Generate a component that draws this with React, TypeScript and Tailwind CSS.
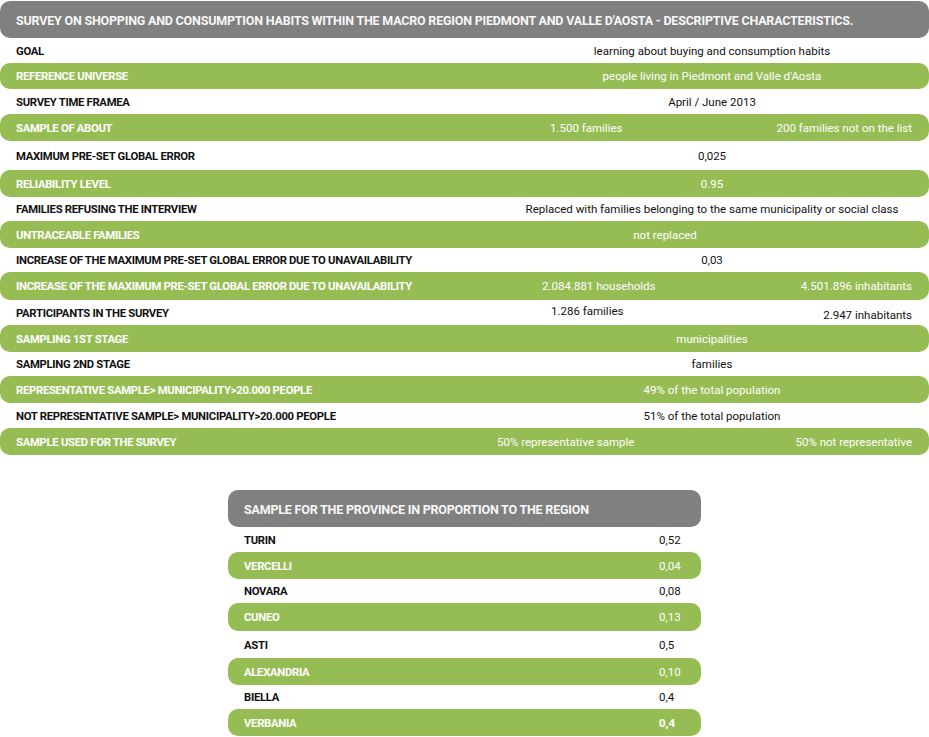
import React from "react";

type Row = {
  label: string;
  value?: string;
  left?: string;
  right?: string;
  green: boolean;
  h: string;
  leftClass?: string;
  valueClass?: string;
};

const rows: Row[] = [
  { label: "GOAL", value: "learning about buying and consumption habits", green: false, h: "h-[25px]" },
  { label: "REFERENCE UNIVERSE", value: "people living in Piedmont and Valle d'Aosta", green: true, h: "h-[26px]" },
  { label: "SURVEY TIME FRAMEA", value: "April / June 2013", green: false, h: "h-[25px]" },
  { label: "SAMPLE OF ABOUT", left: "1.500 families", right: "200 families not on the list", green: true, h: "h-[27px]", leftClass: "ml-[38px]" },
  { label: "MAXIMUM PRE-SET GLOBAL ERROR", value: "0,025", green: false, h: "h-[29px]" },
  { label: "RELIABILITY LEVEL", value: "0.95", green: true, h: "h-[27px]" },
  { label: "FAMILIES REFUSING THE INTERVIEW", value: "Replaced with families belonging to the same municipality or social class", green: false, h: "h-[24px]" },
  { label: "UNTRACEABLE FAMILIES", value: "not replaced", green: true, h: "h-[27px]", valueClass: "pr-[94px]" },
  { label: "INCREASE OF THE MAXIMUM PRE-SET GLOBAL ERROR DUE TO UNAVAILABILITY", value: "0,03", green: false, h: "h-[24px]" },
  { label: "INCREASE OF THE MAXIMUM PRE-SET GLOBAL ERROR DUE TO UNAVAILABILITY", left: "2.084.881 households", right: "4.501.896 inhabitants", green: true, h: "h-[28px]", leftClass: "ml-[30px]" },
  { label: "PARTICIPANTS IN THE SURVEY", left: "1.286 families", right: "2.947 inhabitants", green: false, h: "h-[25px]", leftClass: "ml-[39px] mb-[3px]" },
  { label: "SAMPLING 1ST STAGE", value: "municipalities", green: true, h: "h-[27px]" },
  { label: "SAMPLING 2ND  STAGE", value: "families", green: false, h: "h-[24px]" },
  { label: "REPRESENTATIVE SAMPLE> MUNICIPALITY>20.000 PEOPLE", value: "49% of the total population", green: true, h: "h-[27px]" },
  { label: "NOT REPRESENTATIVE SAMPLE> MUNICIPALITY>20.000 PEOPLE", value: "51% of the total population", green: false, h: "h-[25px]" },
  { label: "SAMPLE USED FOR THE SURVEY", left: "50% representative sample", right: "50% not representative", green: true, h: "h-[27px]", leftClass: "ml-[-15px]" },
];

const provinces: { name: string; value: string; green: boolean; h: string; bold?: boolean }[] = [
  { name: "TURIN", value: "0,52", green: false, h: "h-[25px]" },
  { name: "VERCELLI", value: "0,04", green: true, h: "h-[27px]" },
  { name: "NOVARA", value: "0,08", green: false, h: "h-[24px]" },
  { name: "CUNEO", value: "0,13", green: true, h: "h-[28px]" },
  { name: "ASTI", value: "0,5", green: false, h: "h-[27px]" },
  { name: "ALEXANDRIA", value: "0,10", green: true, h: "h-[27px]" },
  { name: "BIELLA", value: "0,4", green: false, h: "h-[24px]" },
  { name: "VERBANIA", value: "0,4", green: true, h: "h-[27px]", bold: true },
];

const font = { fontFamily: "Roboto, 'Liberation Sans', sans-serif" };

export default function App() {
  return (
    <div className="w-[929px] bg-white pt-px text-black" style={font}>
      {/* main survey table */}
      <div className="flex h-[37px] items-center rounded-[10px] bg-[#808080] pl-4 pt-[3px] text-[12.5px] font-bold tracking-[-0.2px] text-[#f7f7f7]">
        SURVEY ON SHOPPING AND CONSUMPTION HABITS WITHIN THE MACRO REGION PIEDMONT AND VALLE D'AOSTA - DESCRIPTIVE CHARACTERISTICS.
      </div>
      {rows.map((r, i) => (
        <div
          key={i}
          className={`flex items-center pl-4 pr-[17px] ${r.h} ${
            r.green ? "rounded-[10px] bg-[#96bd54] text-white" : "text-[#111]"
          }`}
        >
          <div className="w-[496px] shrink-0 whitespace-nowrap pt-[3px] text-[11.3px] font-bold tracking-[-0.3px]">{r.label}</div>
          {r.value !== undefined ? (
            <div className={`flex-1 whitespace-nowrap pt-[2px] text-center text-[11.5px] ${r.valueClass ?? ""}`}>{r.value}</div>
          ) : (
            <div className="flex flex-1 items-center whitespace-nowrap pt-[2px] text-[11.5px]">
              <span className={r.leftClass}>{r.left}</span>
              <span className={`ml-auto ${r.green ? "" : "mt-[4px]"}`}>{r.right}</span>
            </div>
          )}
        </div>
      ))}

      {/* province table */}
      <div className="ml-[228px] mt-[35px] w-[473px]">
        <div className="flex h-[37px] items-center rounded-[10px] bg-[#808080] pl-4 pt-[3px] text-[12.5px] font-bold tracking-[-0.2px] text-[#f7f7f7]">
          SAMPLE FOR THE PROVINCE IN PROPORTION TO THE REGION
        </div>
        {provinces.map((p) => (
          <div
            key={p.name}
            className={`flex items-center pl-4 ${p.h} ${
              p.green ? "rounded-[10px] bg-[#96bd54] text-white" : "text-[#111]"
            }`}
          >
            <div className="flex-1 pt-[3px] text-[11.3px] font-bold tracking-[-0.3px]">{p.name}</div>
            <div className={`w-[42px] pt-[2px] text-[11.5px] ${p.bold ? "font-bold" : ""}`}>{p.value}</div>
          </div>
        ))}
      </div>
    </div>
  );
}
